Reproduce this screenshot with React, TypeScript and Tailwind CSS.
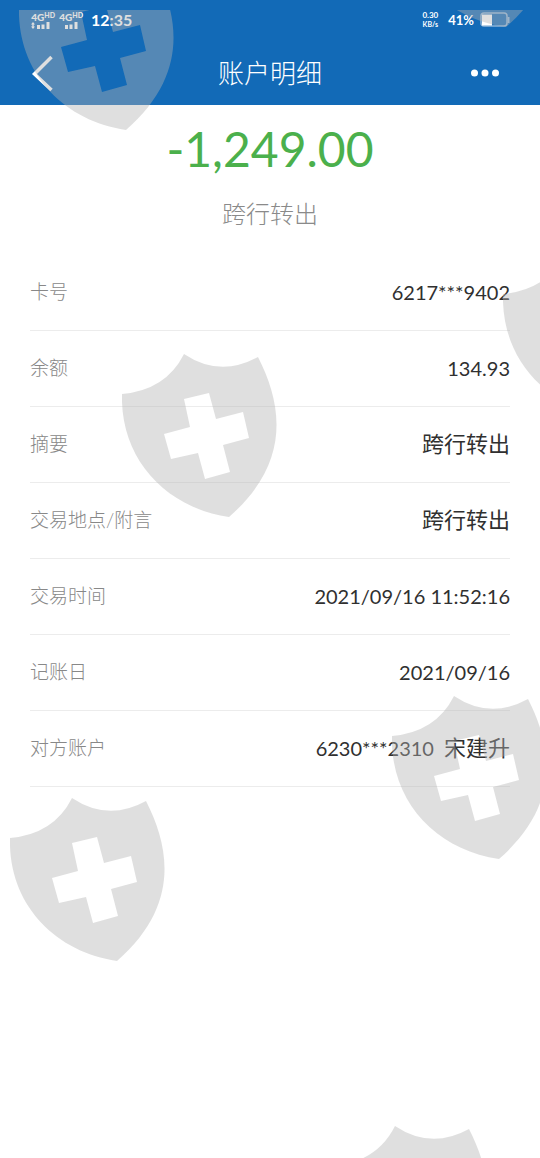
type Detail = {
  label: string
  value?: string
  text?: string
}

const details: Detail[] = [
  { label: '卡号', value: '6217***9402' },
  { label: '余额', value: '134.93' },
  { label: '摘要', text: '跨行转出' },
  { label: '交易地点/附言', text: '跨行转出' },
  { label: '交易时间', value: '2021/09/16 11:52:16' },
  { label: '记账日', value: '2021/09/16' },
  { label: '对方账户', value: '6230***2310', text: '宋建升' }
]

const shields = [
  'left-[19px] -top-[43px]',
  'left-[399px] -top-[146px]',
  'left-[503px] top-[244px]',
  'left-[122px] top-[344px]',
  'left-[392px] top-[686px]',
  'left-[10px] top-[788px]',
  'left-[333px] top-[1116px]'
]

function Shield({ className }: { className: string }) {
  return (
    <svg viewBox="0 0 156 165" className={`absolute h-[165px] w-[156px] ${className}`}>
      <path
        fill="#b3b3b3"
        fillOpacity="0.42"
        fillRule="evenodd"
        d="M0 40Q44 36 62 0Q98 24 136 3C160 50 170 108 107 163C44 154-2 105 0 40ZM62 45L68 73L42 80L49 105L76 99L83 125L108 118L101 91L127 84L121 58L94 65L87 39Z"
      />
    </svg>
  )
}

function Signal({ roaming = false }: { roaming?: boolean }) {
  return (
    <div className="flex w-6 flex-col items-end">
      <div className="flex items-start text-[10px] leading-[10px] font-black">
        4G<span className="text-[7px] leading-[7px]">HD</span>
      </div>
      <svg viewBox="0 0 20 7" className="mr-1 h-[7px] w-5" fill="currentColor">
        {roaming && <path d="M0 2.5L2 0L4 2.5H2.7V4.5H4L2 7L0 4.5H1.3V2.5Z" />}
        <path d="M6 3h3v4H6zM10.500 2.500h3v4.500h-3zM15.500 0h3v7h-3z" />
      </svg>
    </div>
  )
}

function StatusBar() {
  return (
    <div className="flex h-10 items-center justify-between pr-[30px] pl-[31px]">
      <div className="flex items-center gap-1">
        <Signal roaming />
        <Signal />
        <span className="ml-1 text-base leading-5 font-bold">12:35</span>
      </div>
      <div className="flex items-center">
        <div className="text-center text-[8px] leading-[9px] font-bold">
          0.30
          <br />
          <span className="text-[7px]">KB/s</span>
        </div>
        <span className="ml-2.5 text-[13px] leading-5 font-bold">41%</span>
        <svg viewBox="0 0 30 16" className="ml-1.5 h-4 w-[30px]" fill="none">
          <rect x="1" y="1" width="26" height="13" rx="3" stroke="#8fb5d9" strokeWidth="1.500" />
          <path d="M28.500 5v6" stroke="#8fb5d9" strokeWidth="2" />
          <path d="M2 2.500h10v11h-10z" fill="#fff" />
        </svg>
      </div>
    </div>
  )
}

export default function App() {
  return (
    <div className="relative min-h-screen bg-white font-[Lato,'Noto_Sans_CJK_SC',sans-serif]">
      <header className="bg-[#126ab7] text-white">
        <StatusBar />
        <nav className="grid h-[65px] grid-cols-[1fr_auto_1fr] items-center">
          <button aria-label="返回" className="ml-[31px] justify-self-start">
            <svg viewBox="0 0 22 38" className="h-[38px] w-[22px]" fill="none" stroke="currentColor" strokeWidth="3.500">
              <path d="M20.500 3L3.500 20L20.500 36" />
            </svg>
          </button>
          <h1 className="text-[26px] leading-8 font-light">账户明细</h1>
          <button aria-label="更多" className="mr-10 justify-self-end">
            <svg viewBox="0 0 30 8" className="h-2 w-[30px]" fill="currentColor">
              <circle cx="4.500" cy="4" r="3.500" />
              <circle cx="15" cy="4" r="3.500" />
              <circle cx="25.500" cy="4" r="3.500" />
            </svg>
          </button>
        </nav>
      </header>

      <main>
        <div className="pt-2 pb-3 text-center">
          <p className="text-5xl leading-[72px] text-[#4bb04c]">-1,249.00</p>
          <p className="text-2xl leading-[58px] font-light text-[#8a8a8a]">跨行转出</p>
        </div>

        <dl className="mx-[30px]">
          {details.map((item) => (
            <div key={item.label} className="flex h-[76px] items-center justify-between border-b border-[#ececec]">
              <dt className="text-[19px] font-light text-[#888]">{item.label}</dt>
              <dd className="flex items-center gap-2.5 pb-0.5 text-[#303030]">
                {item.value && <span className="text-xl">{item.value}</span>}
                {item.text && <span className="text-[22px]">{item.text}</span>}
              </dd>
            </div>
          ))}
        </dl>
      </main>

      {/* watermark stays below the top edge of the screen */}
      <div aria-hidden="true" className="pointer-events-none absolute inset-x-0 top-2.5 bottom-0 overflow-hidden">
        {shields.map((place) => (
          <Shield key={place} className={place} />
        ))}
      </div>
    </div>
  )
}
